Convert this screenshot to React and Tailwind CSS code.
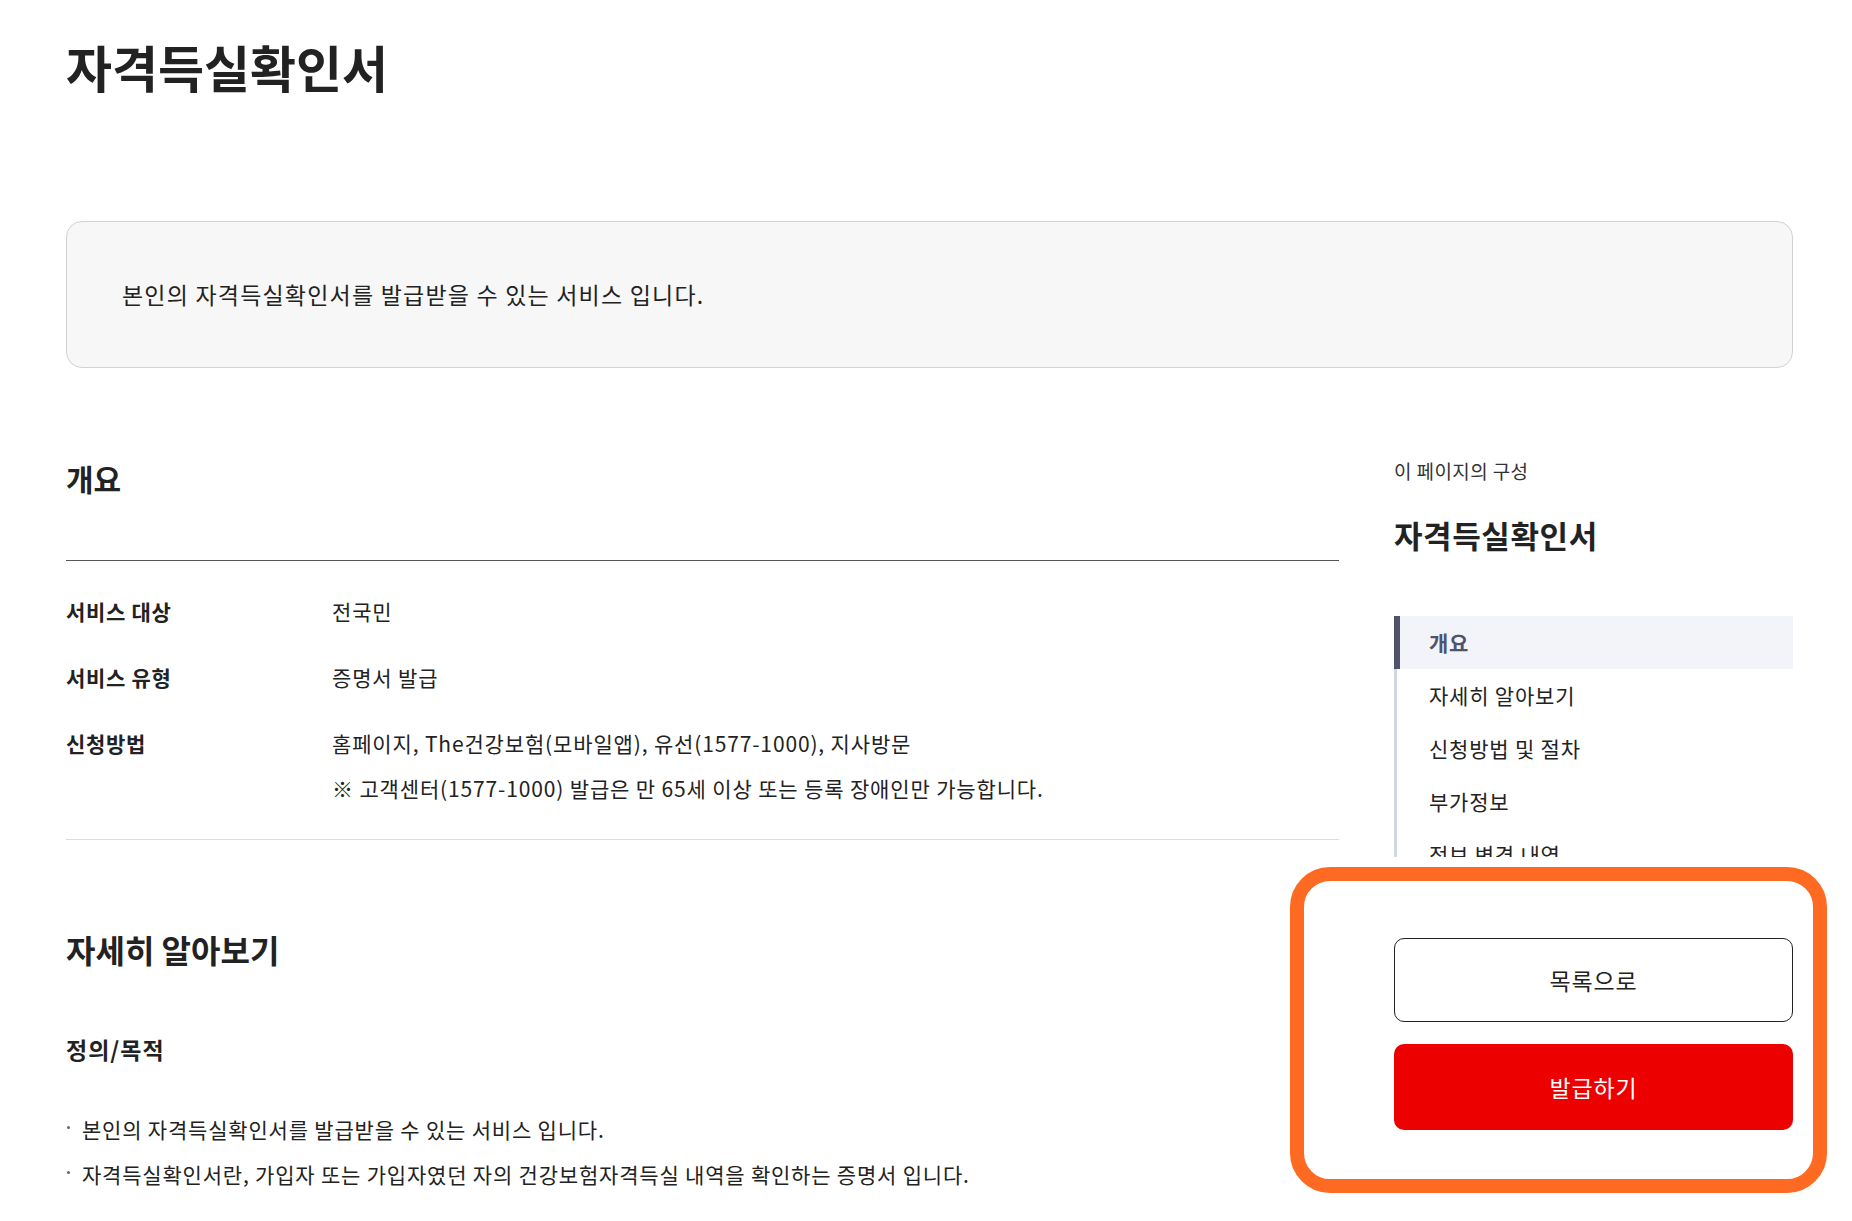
import React from "react";

const rows = [
  { label: "서비스 대상", values: ["전국민"] },
  { label: "서비스 유형", values: ["증명서 발급"] },
  {
    label: "신청방법",
    values: [
      "홈페이지, The건강보험(모바일앱), 유선(1577-1000), 지사방문",
      "※ 고객센터(1577-1000) 발급은 만 65세 이상 또는 등록 장애인만 가능합니다.",
    ],
  },
];

const toc = ["개요", "자세히 알아보기", "신청방법 및 절차", "부가정보", "정보 변경 내역"];

const bullets = [
  "본인의 자격득실확인서를 발급받을 수 있는 서비스 입니다.",
  "자격득실확인서란, 가입자 또는 가입자였던 자의 건강보험자격득실 내역을 확인하는 증명서 입니다.",
];

export default function App() {
  return (
    <div className="h-screen overflow-hidden bg-white text-[#222] font-['Noto_Sans_CJK_KR','Noto_Sans',sans-serif]">
      <div className="pl-[66px] pr-[59px]">
        <h1 className="pt-[36px] text-[50px] font-bold leading-[60px]">
          자격득실확인서
        </h1>

        <div className="mt-[125px] flex h-[147px] items-center rounded-2xl border border-[#d2d2d2] bg-[#f7f7f7] pl-[55px] text-[23px] tracking-[1.2px]">
          본인의 자격득실확인서를 발급받을 수 있는 서비스 입니다.
        </div>

        <div className="mt-[90px] flex gap-[55px]">
          <main className="w-[1273px] shrink-0">
            <section>
              <h2 className="border-b border-[#555] pb-[62px] text-[30px] font-bold leading-[40px]">
                개요
              </h2>
              <div className="flex flex-col gap-[36px] border-b border-[#ddd] pt-[35px] pb-[36px]">
                {rows.map((row) => (
                  <div key={row.label} className="flex text-[21px] leading-[30px] tracking-[0.7px]">
                    <div className="w-[266px] shrink-0 font-bold">{row.label}</div>
                    <div className="flex flex-col gap-[15px] tracking-[0.85px]">
                      {row.values.map((v) => (
                        <p key={v}>{v}</p>
                      ))}
                    </div>
                  </div>
                ))}
              </div>
            </section>

            <section className="pt-[87px]">
              <h2 className="text-[32px] font-bold leading-[44px]">자세히 알아보기</h2>
              <h3 className="mt-[62px] text-[23px] font-bold leading-[32px] tracking-[1px]">정의/목적</h3>
              <ul className="mt-[49px] flex flex-col gap-[15px]">
                {bullets.map((b) => (
                  <li key={b} className="flex items-center text-[21px] leading-[30px] tracking-[0.8px]">
                    <span className="mr-[12px] ml-[1px] h-[3px] w-[3px] shrink-0 -translate-y-[2px] rounded-full bg-[#666]" />
                    {b}
                  </li>
                ))}
              </ul>
            </section>
          </main>

          <aside className="min-w-0 flex-1">
            <p className="text-[19px] leading-[26px] tracking-[0.4px] text-[#333]">이 페이지의 구성</p>
            <p className="mt-[31px] text-[31px] font-bold leading-[40px] tracking-[0.6px]">자격득실확인서</p>

            <nav className="mt-[61px] h-[241px] overflow-hidden">
              {toc.map((item, i) =>
                i === 0 ? (
                  <div
                    key={item}
                    className="flex h-[53px] items-center border-l-[6px] border-[#50536b] bg-[#f3f4f9] pl-[29px] text-[21px] font-bold tracking-[0.8px] text-[#50536b]"
                  >
                    {item}
                  </div>
                ) : (
                  <div
                    key={item}
                    className="flex h-[53px] items-center border-l-[3px] border-[#cfd8e4] pl-[32px] text-[21px] tracking-[0.8px] text-[#222]"
                  >
                    {item}
                  </div>
                )
              )}
            </nav>

            <div className="relative mt-[10px] -ml-[104px] -mr-[34px] rounded-[40px] border-[14px] border-[#ff6a22] bg-white pt-[57px] pr-[20px] pb-[49px] pl-[90px]">
              <div className="flex flex-col gap-[22px]">
                <button className="flex h-[84px] items-center justify-center rounded-[10px] border border-[#222] bg-white text-[23px] tracking-[0.8px] text-[#222]">
                  목록으로
                </button>
                <button className="flex h-[86px] items-center justify-center rounded-[10px] bg-[#ec0000] text-[23px] tracking-[0.8px] text-white">
                  발급하기
                </button>
              </div>
            </div>
          </aside>
        </div>
      </div>
    </div>
  );
}
